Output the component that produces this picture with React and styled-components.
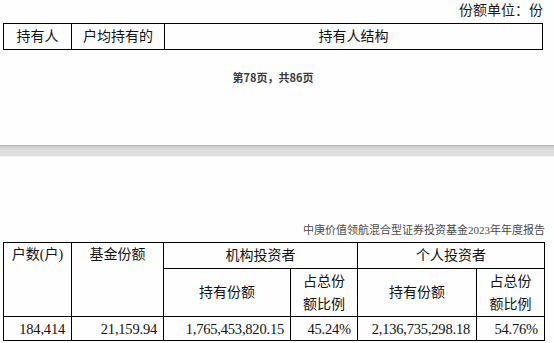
import React from "react";
import styled, { createGlobalStyle } from "styled-components";

const GlobalStyle = createGlobalStyle`
    html, body {
        margin: 0;
        padding: 0;
        background: #fefefe;
    }
    body {
        font-family: "Liberation Serif", "Noto Sans CJK SC", serif;
        color: #111;
    }
`;

const Page = styled.div`
    width: 554px;
    height: 343px;
    overflow: hidden;
    display: flex;
    flex-direction: column;
`;

const UnitLabel = styled.div`
    height: 16px;
    margin-top: 3px;
    padding-right: 11px;
    text-align: right;
    font-size: 14px;
    line-height: 16px;
    color: #1a1a1a;
`;

const Table = styled.table`
    border-collapse: collapse;
    table-layout: fixed;
    width: ${(p) => p.$width}px;
    margin: ${(p) => p.$top}px 0 0 3px;
    font-size: 14px;
    color: #111;

    td {
        border: 1.5px solid #000;
        padding: 0;
        line-height: 18px;
    }
`;

const Cell = styled.td`
    height: ${(p) => p.$h}px;
    text-align: ${(p) => p.$align || "center"};
    vertical-align: ${(p) => p.$valign || "middle"};
    padding-top: ${(p) => p.$pt || 0}px !important;
    padding-right: ${(p) => (p.$align === "right" ? 6 : 0)}px !important;
    font-size: ${(p) => (p.$num ? 14.5 : 14)}px;
    letter-spacing: ${(p) => (p.$num ? "-0.2px" : "0")};
`;

const PageNumber = styled.div`
    margin-top: 20px;
    text-align: center;
    padding-right: 8px;
    font-family: "Noto Sans CJK SC", sans-serif;
    font-size: 11px;
    line-height: 14px;
    font-weight: 700;
    color: #3a3a3a;
`;

const PageBreak = styled.div`
    margin-top: 61px;
    height: 12px;
    box-sizing: border-box;
    border-top: 1px solid #b4b4b4;
    border-bottom: 1px solid #efefef;
    background: linear-gradient(#cfcfcf, #dcdcdc 40%, #e0e0e0);
`;

const ReportTitle = styled.div`
    margin-top: 66px;
    padding-right: 9px;
    text-align: right;
    font-size: 11px;
    line-height: 14px;
    color: #4a4a4a;
`;

const Split = styled.span`
    display: block;
    line-height: 23px;
`;

const App = () => {
    return (
        <>
            <GlobalStyle />
            <Page>
                <UnitLabel>份额单位：份</UnitLabel>
                <Table $width={540} $top={4}>
                    <colgroup>
                        <col style={{ width: 68 }} />
                        <col style={{ width: 93 }} />
                        <col />
                    </colgroup>
                    <tbody>
                        <tr>
                            <Cell $h={25}>持有人</Cell>
                            <Cell $h={25}>户均持有的</Cell>
                            <Cell $h={25}>持有人结构</Cell>
                        </tr>
                    </tbody>
                </Table>
                <PageNumber>第78页，共86页</PageNumber>
                <PageBreak />
                <ReportTitle>中庚价值领航混合型证券投资基金2023年年度报告</ReportTitle>
                <Table $width={541} $top={5}>
                    <colgroup>
                        <col style={{ width: 68 }} />
                        <col style={{ width: 92 }} />
                        <col style={{ width: 127 }} />
                        <col style={{ width: 67 }} />
                        <col style={{ width: 119 }} />
                        <col style={{ width: 68 }} />
                    </colgroup>
                    <tbody>
                        <tr>
                            <Cell rowSpan={2} $valign="top" $pt={3}>户数(户)</Cell>
                            <Cell rowSpan={2} $valign="top" $pt={3}>基金份额</Cell>
                            <Cell colSpan={2} $h={25}>机构投资者</Cell>
                            <Cell colSpan={2} $h={25}>个人投资者</Cell>
                        </tr>
                        <tr>
                            <Cell $h={47}>持有份额</Cell>
                            <Cell $h={47}>
                                <Split>占总份</Split>
                                <Split>额比例</Split>
                            </Cell>
                            <Cell $h={47}>持有份额</Cell>
                            <Cell $h={47}>
                                <Split>占总份</Split>
                                <Split>额比例</Split>
                            </Cell>
                        </tr>
                        <tr>
                            <Cell $h={23} $align="right" $num>184,414</Cell>
                            <Cell $h={23} $align="right" $num>21,159.94</Cell>
                            <Cell $h={23} $align="right" $num>1,765,453,820.15</Cell>
                            <Cell $h={23} $align="right" $num>45.24%</Cell>
                            <Cell $h={23} $align="right" $num>2,136,735,298.18</Cell>
                            <Cell $h={23} $align="right" $num>54.76%</Cell>
                        </tr>
                    </tbody>
                </Table>
            </Page>
        </>
    );
};

export default App;
